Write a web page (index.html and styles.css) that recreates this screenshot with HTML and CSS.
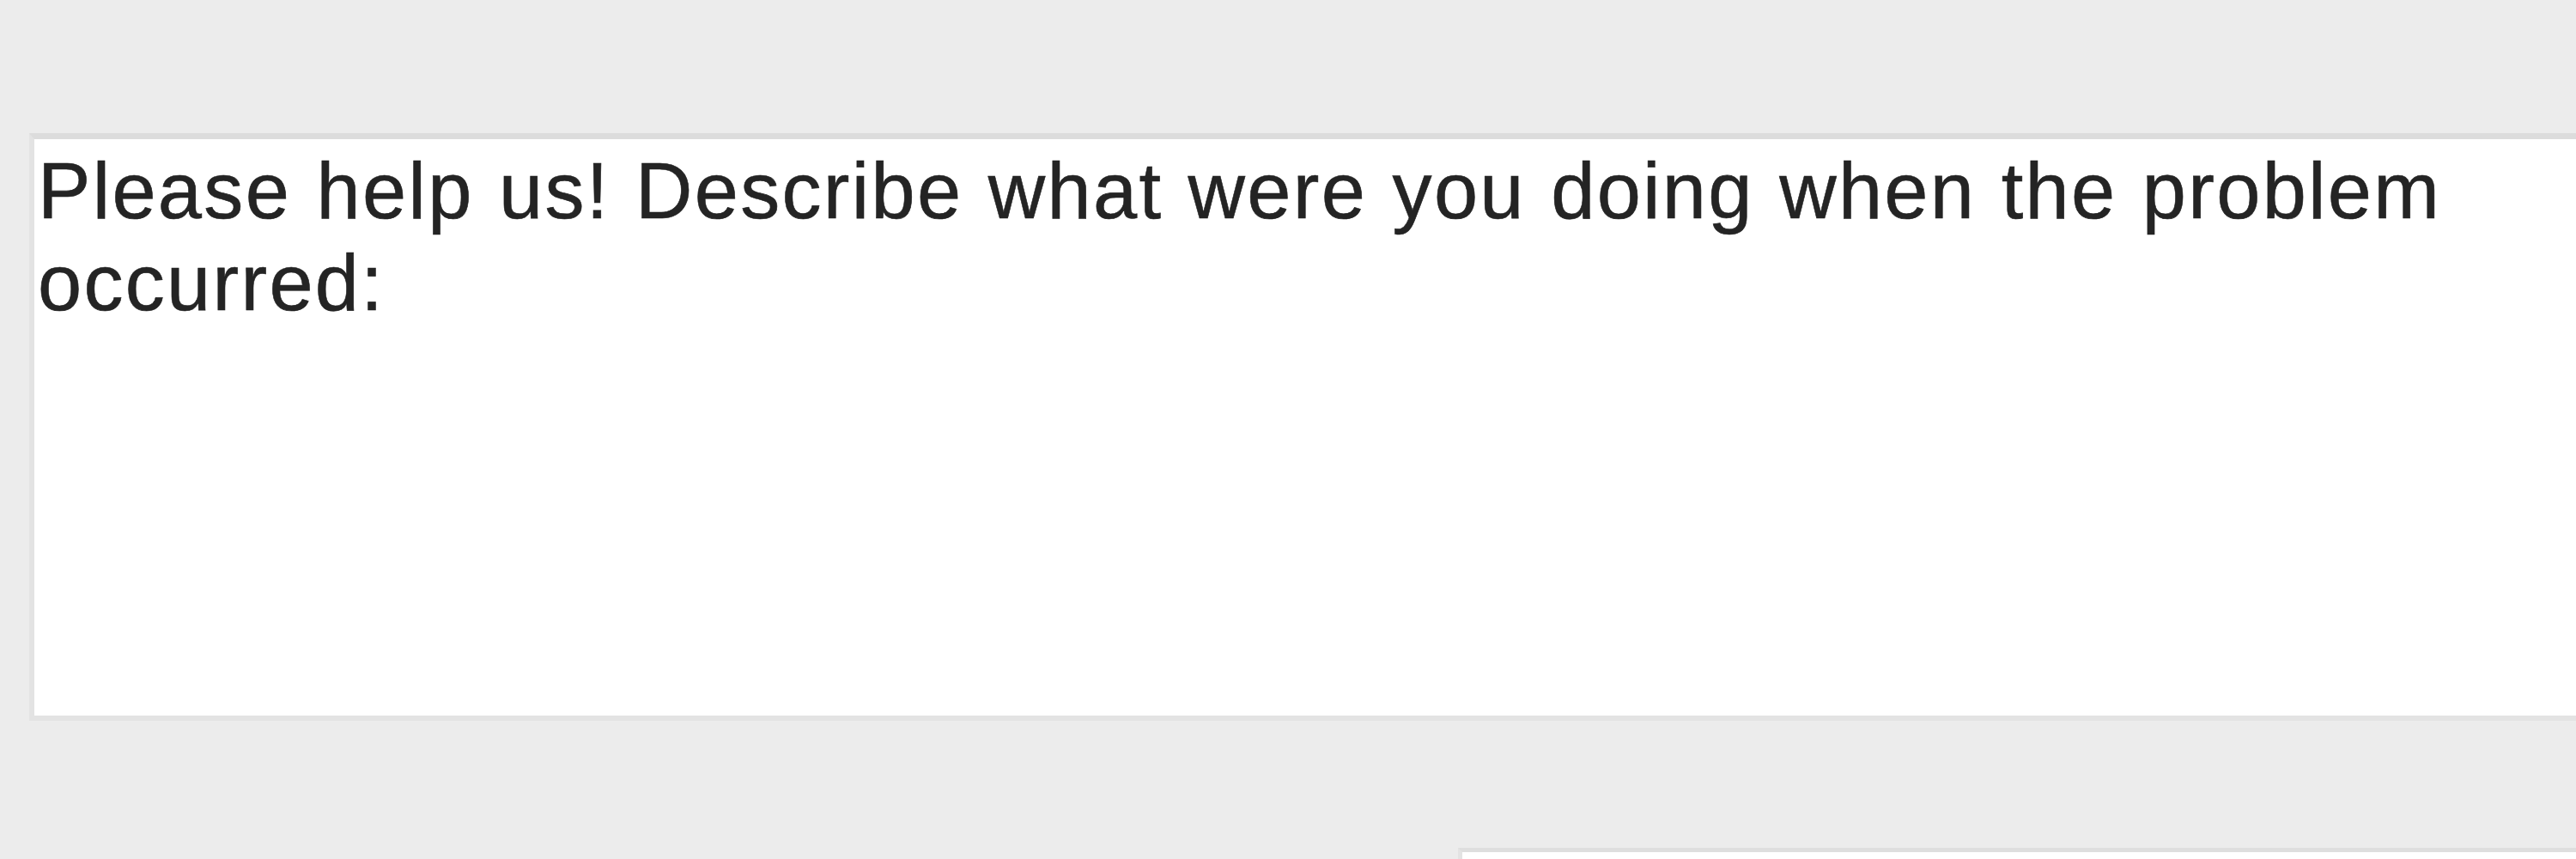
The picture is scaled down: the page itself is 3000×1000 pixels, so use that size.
FILE: index.html
```html
<!DOCTYPE html>
<html lang="en">
<head>
<meta charset="utf-8">
<title>Problem report</title>
<link rel="stylesheet" href="styles.css">
</head>
<body>
<main class="window">
  <div class="report-field">
    <p class="prompt">Please help us! Describe what were you doing when the problem occurred:</p>
  </div>
  <div class="footer">
    <div class="footer-field"></div>
  </div>
</main>
</body>
</html>
```
FILE: styles.css
```css
html, body {
  margin: 0;
  padding: 0;
  height: 100%;
  overflow: hidden;
  background: #ececec;
}

.window {
  display: flex;
  flex-direction: column;
  padding: 155px 0 0 34px;
  font-family: "Liberation Sans", Arial, sans-serif;
  color: #242424;
}

.report-field {
  height: 671px;
  margin-right: -20px;
  background: #ffffff;
  border: 6px solid #e3e3e3;
  border-top-color: #dcdcdc;
  border-top-width: 7px;
}

.prompt {
  margin: 0;
  padding: 7px 0 0 4px;
  font-size: 92px;
  line-height: 107px;
  letter-spacing: 2.3px;
  word-spacing: 1.5px;
  -webkit-text-stroke: 0.6px #242424;
}

.footer {
  display: flex;
  justify-content: flex-end;
  margin-top: 148px;
}

.footer-field {
  width: 1305px;
  height: 80px;
  margin-right: -13px;
  background: #ffffff;
  border: 5px solid #e3e3e3;
  border-top-color: #dedede;
}
```
